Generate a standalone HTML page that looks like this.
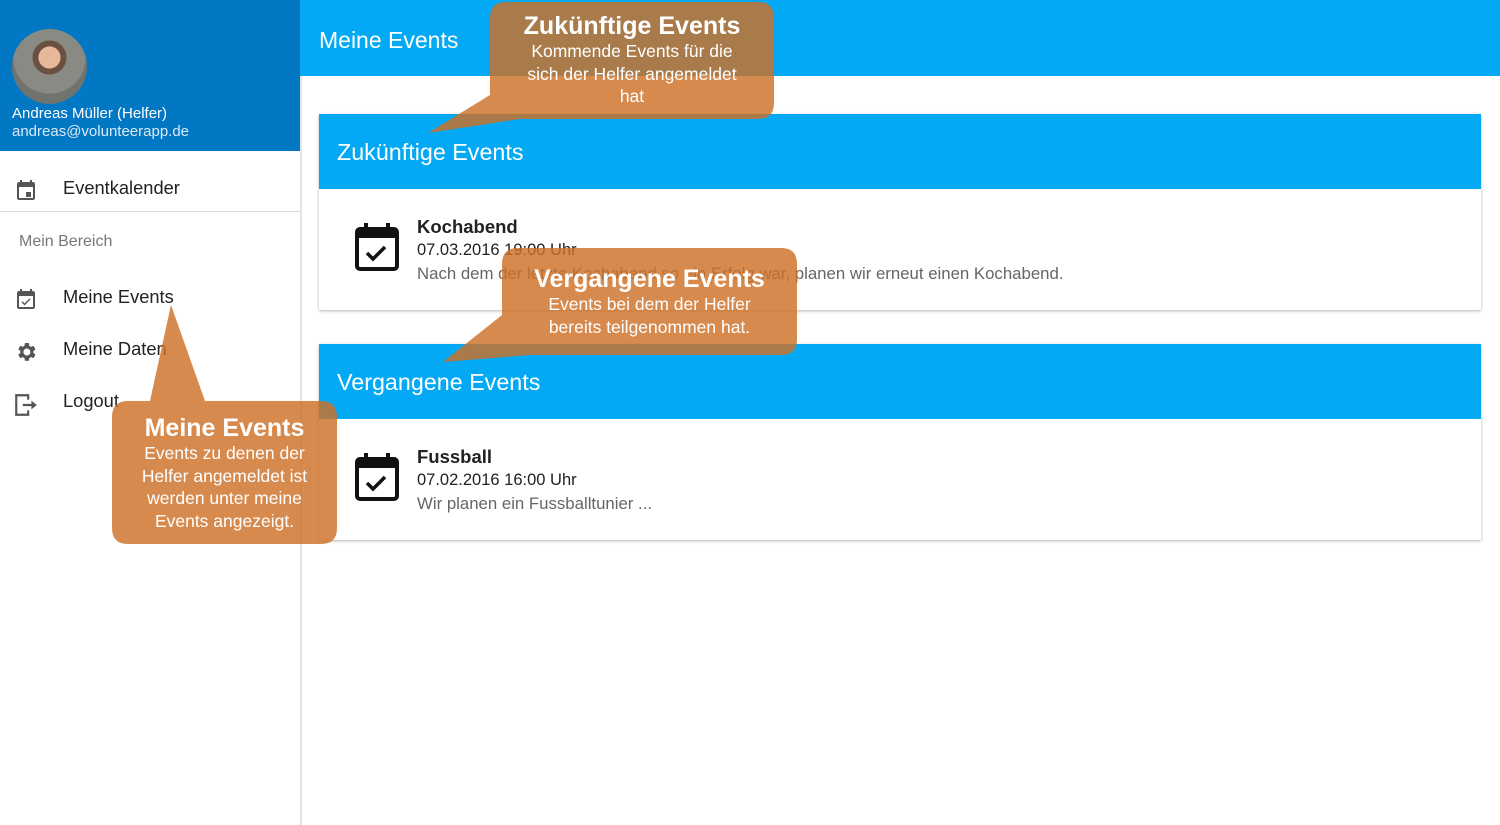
<!DOCTYPE html><html><head><meta charset="utf-8"><style>
body{margin:0;width:1500px;height:825px;position:relative;overflow:hidden;font-family:"Liberation Sans",sans-serif;background:#fff}
.abs{position:absolute}
.side{left:0;top:0;width:300px;height:825px;border-right:2px solid #e4e4e4;background:#fff}
.sh{left:0;top:0;width:300px;height:151px;background:#0277c4;color:#fff}
.top{left:300px;top:0;width:1200px;height:76px;background:#03a9f4;color:#fff;font-size:23px}
.card{left:319px;width:1162px;background:#fff;box-shadow:0 1px 3px rgba(0,0,0,.3)}
.ch{height:75px;background:#03a9f4;color:#fff;font-size:23.3px;padding-left:18px;line-height:76px}
.item{font-size:18.3px;color:#222}
.co{color:#fff;text-align:center;font-size:17.5px;line-height:22.5px}
.co b{font-size:25px;display:block;line-height:28px}
</style></head><body>
<div class="abs side"></div>
<div class="abs sh">
<div class="abs" style="left:12px;top:29px;width:75px;height:75px;border-radius:50%;background:radial-gradient(circle at 50% 38%,#e8b89a 0 18%,#6a5040 19% 28%,#8a8a84 29% 60%,#6f746e 61%)"></div>
<div class="abs" style="left:12px;top:105px;font-size:15px">Andreas Müller (Helfer)</div>
<div class="abs" style="left:12px;top:123px;font-size:15px;color:#dbeaf7">andreas@volunteerapp.de</div>
</div>
<svg class="abs" style="left:14px;top:179px" width="24" height="24" viewBox="0 0 24 24"><path fill="#555" d="M19 3h-1V1h-2v2H8V1H6v2H5C3.9 3 3 3.9 3 5v14c0 1.1.9 2 2 2h14c1.1 0 2-.9 2-2V5c0-1.1-.9-2-2-2zm0 16H5V8h14v11zM12 13h5v5h-5z"/></svg>
<div class="abs item" style="left:63px;top:177px">Eventkalender</div>
<div class="abs" style="left:0;top:211px;width:300px;height:1px;background:#ddd"></div>
<div class="abs" style="left:19px;top:233px;font-size:16px;color:#777">Mein Bereich</div>
<svg class="abs" style="left:14px;top:288px" width="24" height="24" viewBox="0 0 24 24"><path fill="#555" d="M16.5 11.5l-1-1-4.9 4.9-2.1-2.1-1 1 3.1 3.1zM19 3h-1V1h-2v2H8V1H6v2H5C3.9 3 3 3.9 3 5v14c0 1.1.9 2 2 2h14c1.1 0 2-.9 2-2V5c0-1.1-.9-2-2-2zm0 16H5V8h14v11z"/></svg>
<div class="abs item" style="left:63px;top:286px">Meine Events</div>
<svg class="abs" style="left:14px;top:340px" width="24" height="24" viewBox="0 0 24 24"><path fill="#555" d="M19.4 13a7.5 7.5 0 000-2l2.1-1.6-2-3.5-2.5 1a7 7 0 00-1.7-1L14.9 3h-4l-.4 2.7a7 7 0 00-1.7 1l-2.5-1-2 3.5L6.4 11a7.5 7.5 0 000 2l-2.1 1.6 2 3.5 2.5-1a7 7 0 001.7 1l.4 2.7h4l.4-2.7a7 7 0 001.7-1l2.5 1 2-3.5zM12.9 15.5a3.5 3.5 0 110-7 3.5 3.5 0 010 7z"/></svg>
<div class="abs item" style="left:63px;top:338px">Meine Daten</div>
<svg class="abs" style="left:13px;top:392px" width="26" height="26" viewBox="0 0 24 24"><path fill="none" stroke="#555" stroke-width="2" d="M14 7V3H3v18h11v-4"/><path fill="#555" d="M9 11h8V8l5 4-5 4v-3H9z"/></svg>
<div class="abs item" style="left:63px;top:390px">Logout</div>
<div class="abs top"><div class="abs" style="left:19px;top:27px">Meine Events</div></div>
<div class="abs card" style="top:114px;height:196px"><div class="ch">Zukünftige Events</div>
<svg class="abs" style="left:35px;top:108px" width="46" height="50" viewBox="0 0 46 50"><rect x="3" y="7" width="40" height="40" rx="3" fill="none" stroke="#111" stroke-width="4"/><rect x="3" y="7" width="40" height="9" fill="#111"/><rect x="10" y="1" width="4" height="10" fill="#111"/><rect x="32" y="1" width="4" height="10" fill="#111"/><path d="M13 31l6 6 12-12" fill="none" stroke="#111" stroke-width="3.5"/></svg>
<div class="abs" style="left:98px;top:102px;font-size:18.5px;font-weight:bold;color:#222">Kochabend</div>
<div class="abs" style="left:98px;top:127px;font-size:16.5px;color:#222">07.03.2016 19:00 Uhr</div>
<div class="abs" style="left:98px;top:150px;font-size:16.8px;color:#666">Nach dem der letzte Kochabend so ein Erfolg war, planen wir erneut einen Kochabend.</div></div>
<div class="abs card" style="top:344px;height:196px"><div class="ch">Vergangene Events</div>
<svg class="abs" style="left:35px;top:108px" width="46" height="50" viewBox="0 0 46 50"><rect x="3" y="7" width="40" height="40" rx="3" fill="none" stroke="#111" stroke-width="4"/><rect x="3" y="7" width="40" height="9" fill="#111"/><rect x="10" y="1" width="4" height="10" fill="#111"/><rect x="32" y="1" width="4" height="10" fill="#111"/><path d="M13 31l6 6 12-12" fill="none" stroke="#111" stroke-width="3.5"/></svg>
<div class="abs" style="left:98px;top:102px;font-size:18.5px;font-weight:bold;color:#222">Fussball</div>
<div class="abs" style="left:98px;top:127px;font-size:16.5px;color:#222">07.02.2016 16:00 Uhr</div>
<div class="abs" style="left:98px;top:150px;font-size:16.8px;color:#666">Wir planen ein Fussballtunier ...</div></div>
<svg class="abs" style="left:0;top:0" width="1500" height="825"><g fill="rgba(206,112,38,.82)">
<path d="M506,2 H758 Q774,2 774,18 V103 Q774,119 758,119 H520 L428,133 L490,95 V18 Q490,2 506,2Z"/>
<path d="M518,248 H781 Q797,248 797,264 V339 Q797,355 781,355 H530 L443,362 L502,315 V264 Q502,248 518,248Z"/>
<path d="M128,401 H150 L171,305 L205,401 H321 Q337,401 337,417 V528 Q337,544 321,544 H128 Q112,544 112,528 V417 Q112,401 128,401Z"/>
</g></svg>
<div class="abs co" style="left:490px;top:2px;width:284px;padding-top:10px"><b>Zukünftige Events</b>Kommende Events für die<br>sich der Helfer angemeldet<br>hat</div>
<div class="abs co" style="left:502px;top:248px;width:295px;padding-top:17px"><b>Vergangene Events</b>Events bei dem der Helfer<br>bereits teilgenommen hat.</div>
<div class="abs co" style="left:112px;top:401px;width:225px;padding-top:13px"><b>Meine Events</b>Events zu denen der<br>Helfer angemeldet ist<br>werden unter meine<br>Events angezeigt.</div>
</body></html>
